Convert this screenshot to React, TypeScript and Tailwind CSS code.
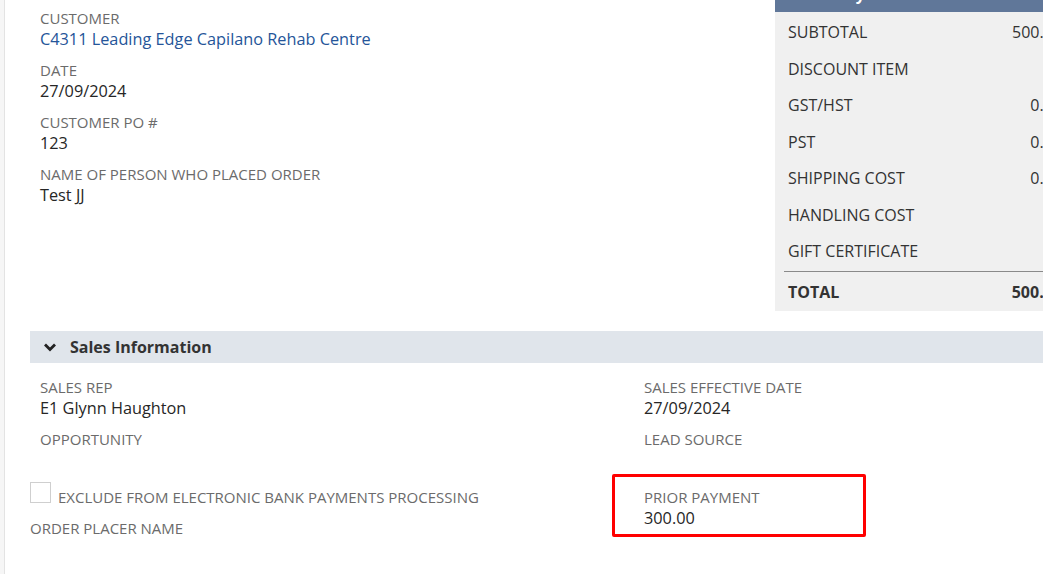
import React from "react";

const font = { fontFamily: '"Open Sans", "Liberation Sans", sans-serif' };

const summaryRows = [
  { label: "SUBTOTAL", value: "500.00" },
  { label: "DISCOUNT ITEM", value: "" },
  { label: "GST/HST", value: "0.00" },
  { label: "PST", value: "0.00" },
  { label: "SHIPPING COST", value: "0.00" },
  { label: "HANDLING COST", value: "" },
  { label: "GIFT CERTIFICATE", value: "" },
];

function Field({
  label,
  value,
  link,
}: {
  label: string;
  value?: string;
  link?: boolean;
}) {
  return (
    <div className="mb-[10px]">
      <div className="text-[15px] leading-[20px] text-[#6b6b6b]">{label}</div>
      <div
        className={`h-[22px] text-[16.3px] leading-[22px] ${
          link ? "text-[#255599]" : "text-[#262626]"
        }`}
      >
        {value}
      </div>
    </div>
  );
}

export default function App() {
  return (
    <div
      className="w-[1043px] h-[574px] overflow-hidden bg-white flex"
      style={font}
    >
      {/* left gutter */}
      <div className="w-[5px] shrink-0 bg-[#f6f6f6] border-r border-[#e3e3e3]" />

      <div className="flex-1 min-w-0">
        {/* Primary info + summary */}
        <div className="flex">
          <div className="w-[770px] shrink-0 pl-[35px] pt-[8px]">
            <Field
              label="CUSTOMER"
              value="C4311 Leading Edge Capilano Rehab Centre"
              link
            />
            <Field label="DATE" value="27/09/2024" />
            <Field label="CUSTOMER PO #" value="123" />
            <Field label="NAME OF PERSON WHO PLACED ORDER" value="Test JJ" />
          </div>

          <div className="w-[300px] shrink-0 bg-[#f0f0f0] h-[311px] overflow-hidden">
            <div className="h-[40px] mt-[-28px] bg-[#607799] px-[13px] flex items-center text-white text-[16px] font-bold leading-[22px] pt-[3px]">
              Summary
            </div>
            <div className="pt-[2px]">
              {summaryRows.map((r) => (
                <div
                  key={r.label}
                  className="h-[36.5px] flex items-center justify-between pl-[13px] pr-[13px] text-[16px] text-[#333333]"
                >
                  <span>{r.label}</span>
                  <span>{r.value}</span>
                </div>
              ))}
            </div>
            <div className="ml-[9px] mt-[1px] border-t border-[#8a8a8a]" />
            <div className="h-[40px] flex items-center justify-between pl-[13px] pr-[13px] text-[16px] font-bold text-[#333333]">
              <span>TOTAL</span>
              <span>500.00</span>
            </div>
          </div>
        </div>

        {/* Sales Information */}
        <div className="ml-[25px] mt-[20px]">
          <div className="h-[32px] bg-[#e0e5eb] flex items-center pl-[13px]">
            <svg width="14" height="14" viewBox="0 0 14 14" className="mr-[13px]">
              <polyline
                points="2,4.5 7,9.5 12,4.5"
                fill="none"
                stroke="#222"
                strokeWidth="2.8"
              />
            </svg>
            <span className="text-[16px] font-bold text-[#333333]">
              Sales Information
            </span>
          </div>

          <div className="grid grid-cols-[584px_1fr] pt-[14px]">
            <div>
              <div className="pl-[10px]">
                <Field label="SALES REP" value="E1 Glynn Haughton" />
                <Field label="OPPORTUNITY" />
              </div>
              <div className="flex">
                <div className="w-[21px] h-[21px] mt-[1px] border border-[#cfcfcf] bg-white" />
                <div className="ml-[7px] mt-[6px] text-[15px] leading-[20px] text-[#6b6b6b]">
                  EXCLUDE FROM ELECTRONIC BANK PAYMENTS PROCESSING
                </div>
              </div>
              <div className="mt-[11px] text-[15px] leading-[20px] text-[#6b6b6b]">
                ORDER PLACER NAME
              </div>
            </div>

            <div>
              <div className="pl-[30px]">
                <Field label="SALES EFFECTIVE DATE" value="27/09/2024" />
                <Field label="LEAD SOURCE" />
              </div>
              <div className="-ml-[2px] -mt-[7px] w-[254px] h-[63px] border-[3px] border-[#ff0000] rounded-[2px] pl-[29px] pt-[10px]">
                <div className="text-[15px] leading-[20px] text-[#6b6b6b]">
                  PRIOR PAYMENT
                </div>
                <div className="text-[16.3px] leading-[22px] text-[#262626]">
                  300.00
                </div>
              </div>
            </div>
          </div>
        </div>
      </div>
    </div>
  );
}
